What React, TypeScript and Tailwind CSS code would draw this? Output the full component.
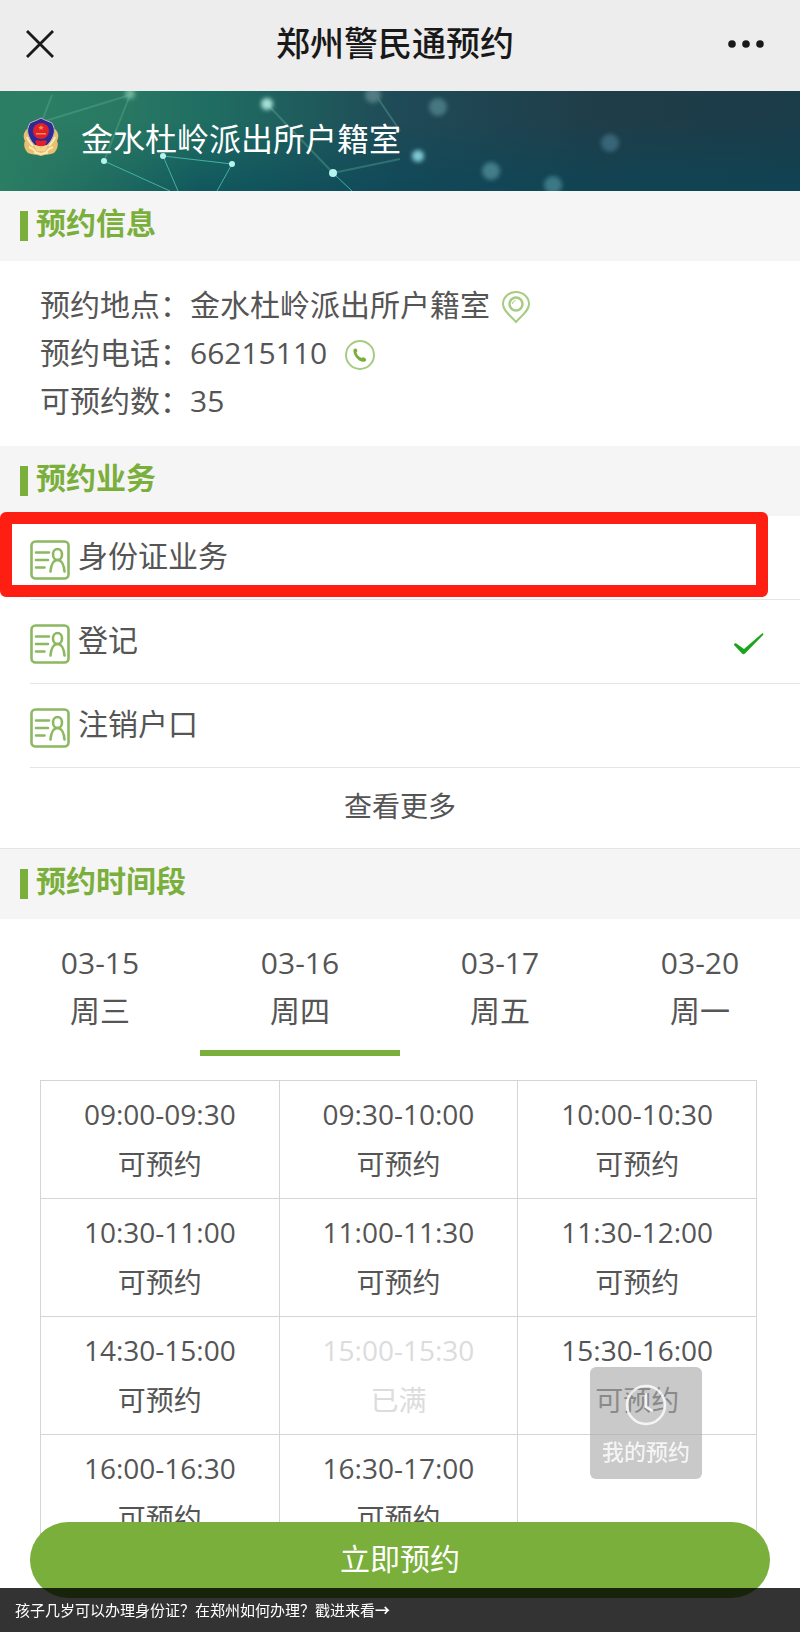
import { useState } from "react"

const services = ["身份证业务", "登记", "注销户口"]

const days = [
  { date: "03-15", week: "周三" },
  { date: "03-16", week: "周四" },
  { date: "03-17", week: "周五" },
  { date: "03-20", week: "周一" },
]

const slots = [
  { time: "09:00-09:30" },
  { time: "09:30-10:00" },
  { time: "10:00-10:30" },
  { time: "10:30-11:00" },
  { time: "11:00-11:30" },
  { time: "11:30-12:00" },
  { time: "14:30-15:00" },
  { time: "15:00-15:30", full: true },
  { time: "15:30-16:00" },
  { time: "16:00-16:30" },
  { time: "16:30-17:00" },
]

function SectionTitle({ children }: { children: string }) {
  return (
    <div className="flex h-[70px] gap-2 bg-[#f5f5f5] px-5 pt-2.5">
      <span className="mt-2.5 h-[30px] w-2 bg-[#7aaf3c]" />
      <h2 className="text-[30px] leading-[44px] font-bold text-[#7aaf3c]">{children}</h2>
    </div>
  )
}

function BannerArt() {
  return (
    <svg className="absolute inset-0 h-full w-full" viewBox="0 0 800 100" preserveAspectRatio="none" aria-hidden="true">
      <defs>
        <linearGradient id="base" x1="0" y1="0" x2="1" y2="0">
          <stop offset="0" stopColor="#2f8064" />
          <stop offset="0.27" stopColor="#1f6c62" />
          <stop offset="0.5" stopColor="#1f4a57" />
          <stop offset="0.75" stopColor="#1f3d49" />
          <stop offset="1" stopColor="#1b3c49" />
        </linearGradient>
        <linearGradient id="depth" x1="0" y1="0" x2="0" y2="1">
          <stop offset="0.3" stopColor="#06485a" stopOpacity="0" />
          <stop offset="1" stopColor="#06485a" stopOpacity="0.6" />
        </linearGradient>
        <linearGradient id="fade" x1="0" y1="0" x2="1" y2="0">
          <stop offset="0" stopColor="#2b7d63" />
          <stop offset="1" stopColor="#2b7d63" stopOpacity="0" />
        </linearGradient>
        <filter id="soft" x="-50%" y="-50%" width="200%" height="200%">
          <feGaussianBlur stdDeviation="2" />
        </filter>
      </defs>
      <rect width="800" height="100" fill="url(#base)" />
      <rect width="800" height="100" fill="url(#depth)" />
      <rect width="200" height="100" fill="url(#fade)" />
      <g stroke="#5fb79c" strokeWidth="2" opacity="0.35" fill="none">
        <path d="M45 30 130 4M52 4 42 30M130 4 104 70" />
        <path d="M267 13 333 82M375 3 400 40M333 82 400 68" />
      </g>
      <g stroke="#4cc0ae" strokeWidth="1" opacity="0.85" fill="none">
        <path d="M104 70 170 100M163 65 178 100M163 65 232 73 217 100M333 82 352 100" />
      </g>
      <g fill="#b5f3ee">
        <circle cx="104" cy="70" r="3" />
        <circle cx="163" cy="65" r="3" />
        <circle cx="232" cy="73" r="3" />
        <circle cx="333" cy="82" r="4" />
      </g>
      <g filter="url(#soft)">
        <circle cx="267" cy="13" r="6" fill="#a5e0d6" />
        <circle cx="130" cy="3" r="5" fill="#6fb89c" />
        <circle cx="373" cy="4" r="8" fill="#517b83" />
        <circle cx="418" cy="65" r="6" fill="#7dc8d4" />
        <circle cx="438" cy="16" r="9" fill="#467780" />
        <circle cx="491" cy="80" r="9" fill="#437d88" />
        <circle cx="553" cy="94" r="9" fill="#3b7885" />
        <circle cx="610" cy="52" r="9" fill="#376577" />
      </g>
    </svg>
  )
}

function PoliceBadge() {
  return (
    <svg className="h-10 w-9" viewBox="0 0 36 40" aria-hidden="true">
      <path d="M4 12C0 16 0 20 2 24c-2 4 0 9 3 12 4 2 8 1 13 3 5-2 9-1 13-3 3-3 5-8 3-12 2-4 2-8-2-12z" fill="#e8c070" />
      <path d="M4 20c1 4 4 6 6 9M32 20c-1 4-4 6-6 9M6 30c3 1 5 2 7 5M30 30c-3 1-5 2-7 5M11 36c3-1 5 1 7 1s4-2 7-1" stroke="#fbe9b5" strokeWidth="2" fill="none" />
      <path d="M18 1c3 2 7 3 11 5 2 4 3 7 2 11-2 6-5 10-8 12H13c-3-2-6-6-8-12-1-4 0-7 2-11 4-2 8-3 11-5z" fill="#2c2a96" stroke="#c5b5b8" strokeWidth="1" />
      <circle cx="18" cy="14" r="8" fill="#e0202a" />
      <path d="m18 8 .8 1.800 2 .2-1.500 1.200.5 1.800-1.800-1-1.800 1 .5-1.800-1.500-1.200 2-.2zM13 16h10v1.500H13z" fill="#f28a4a" />
      <path d="M12 24c2-1 4-1 6 0 2-1 4-1 6 0l-2 5h-8z" fill="#e0202a" />
      <path d="M11 28c3 0 5 1 7 3 2-2 4-3 7-3l-3 6h-8z" fill="#f3d68c" />
    </svg>
  )
}

function IdCardIcon() {
  return (
    <svg className="size-10 shrink-0" viewBox="0 0 40 40" fill="none" stroke="#8bb860" strokeWidth="2.600" strokeLinecap="round" aria-hidden="true">
      <rect x="1.500" y="1.500" width="37" height="37" rx="4" />
      <path d="M6 12.500h13M6 20h12M6 27.500h8.500" />
      <ellipse cx="27.500" cy="14.500" rx="4.500" ry="5.500" />
      <path d="M20.500 31.500c.5-6.500 3-11.500 7-11.500s6.500 5 7 11.500" />
    </svg>
  )
}

export default function App() {
  const [service, setService] = useState(1)
  const [day, setDay] = useState(1)

  return (
    <div className="min-h-screen bg-white font-['Open_Sans','Noto_Sans_CJK_SC',sans-serif] text-[#555]">
      <header className="flex h-[91px] items-center justify-between bg-[#ededed] pr-9 pl-[26px] pb-1 text-[#191919]">
        <button aria-label="关闭" className="w-16">
          <svg className="size-7" viewBox="0 0 28 28" stroke="currentColor" strokeWidth="2.800" aria-hidden="true">
            <path d="m1 1 26 26M27 1 1 27" />
          </svg>
        </button>
        <h1 className="text-[34px] font-medium">郑州警民通预约</h1>
        <button aria-label="更多" className="flex w-16 justify-end">
          <svg className="h-2 w-9 shrink-0" viewBox="0 0 36 8" fill="currentColor" aria-hidden="true">
            <circle cx="4" cy="4" r="3.800" />
            <circle cx="18" cy="4" r="3.800" />
            <circle cx="32" cy="4" r="3.800" />
          </svg>
        </button>
      </header>

      <div className="relative h-[100px]">
        <BannerArt />
        <div className="relative flex h-full items-center gap-[22px] px-[23px] pb-2">
          <PoliceBadge />
          <p className="pt-1 text-[32px] text-white">金水杜岭派出所户籍室</p>
        </div>
      </div>

      <SectionTitle>预约信息</SectionTitle>
      <dl className="px-10 pt-5 pb-[21px] text-[30px] leading-[48px]">
        <div className="flex">
          <dt>预约地点：</dt>
          <dd className="flex items-center gap-3">
            金水杜岭派出所户籍室
            <a href="#map" aria-label="地图">
              <svg className="mt-1 h-8 w-7" viewBox="0 0 28 32" fill="none" stroke="#a5cc80" strokeWidth="2" aria-hidden="true">
                <path d="M14 31C9 25 1 20 1 13a13 12 0 0 1 26 0c0 7-8 12-13 18z" />
                <circle cx="14" cy="13" r="6.500" strokeWidth="2.500" />
                <path d="M10.500 13a3.500 3.500 0 0 1 3-3.500" strokeWidth="1" />
              </svg>
            </a>
          </dd>
        </div>
        <div className="flex">
          <dt>预约电话：</dt>
          <dd className="flex items-center gap-[18px]">
            66215110
            <a href="tel:66215110" aria-label="拨打电话">
              <svg className="mt-1 size-[30px]" viewBox="0 0 30 30" fill="none" aria-hidden="true">
                <circle cx="15" cy="15" r="14" stroke="#a5cc80" strokeWidth="2" />
                <path d="M8.500 9.500c1-1.500 3-1.500 3.500 0s.5 2-.5 3c.5 2.500 2.500 4.500 5 5.500 1-1 2-1 3.500 0s1.500 2.500 0 3.500c-5 2-12.500-6-11.500-12z" fill="#7aaf3c" />
              </svg>
            </a>
          </dd>
        </div>
        <div className="flex">
          <dt>可预约数：</dt>
          <dd>35</dd>
        </div>
      </dl>

      <SectionTitle>预约业务</SectionTitle>
      <ul className="relative">
        {services.map((name, i) => (
          <li key={name} className="pl-[30px]">
            <button
              onClick={() => setService(i)}
              aria-pressed={service === i}
              className="flex h-[84px] w-full items-center gap-2 border-b border-[#e5e5e5] pt-1 pr-9 text-left text-[30px]"
            >
              <IdCardIcon />
              <span className="flex-1 pb-2">{name}</span>
              {service === i && (
                <svg className="h-[22px] w-[30px]" viewBox="0 0 30 22" fill="#1aa51c" aria-hidden="true">
                  <path d="M0 12c0-2 2-2 3-1l7 5L28 .5c1-.5 2 .5 1 1.500L11 20.500c-1 1-2 1-3 0z" />
                </svg>
              )}
            </button>
          </li>
        ))}
        {/* highlight frame over the first item */}
        <li aria-hidden="true" className="pointer-events-none absolute -top-1 right-8 left-0 h-[85px] rounded-md border-12 border-[#ff1e12]" />
      </ul>
      <button className="block h-[81px] w-full border-b border-[#e5e5e5] pb-1 text-[28px]">查看更多</button>

      <SectionTitle>预约时间段</SectionTitle>
      <div className="grid grid-cols-4" role="tablist">
        {days.map((d, i) => (
          <button
            key={d.date}
            role="tab"
            aria-selected={day === i}
            onClick={() => setDay(i)}
            className={`border-b-6 pt-5 pb-[15px] text-[30px] leading-[48px] ${day === i ? "border-[#7aaf3c]" : "border-transparent"}`}
          >
            <span className="block">{d.date}</span>
            <span className="block">{d.week}</span>
          </button>
        ))}
      </div>

      <div className="mt-6 mr-[43px] mb-10 ml-10 grid grid-cols-3 border-t border-l border-[#d5d5d5] text-[28px] leading-[50px]">
        {slots.map((s) => (
          <button
            key={s.time}
            disabled={s.full}
            className={`border-r border-b border-[#d5d5d5] pt-2 pb-[9px] ${s.full ? "text-[#dcdcdc]" : ""}`}
          >
            <span className="block">{s.time}</span>
            <span className="block">{s.full ? "已满" : "可预约"}</span>
          </button>
        ))}
        <div className="border-r border-b border-[#d5d5d5]" />
      </div>

      <button className="fixed right-[98px] bottom-[153px] flex size-28 flex-col items-center gap-2 rounded-md bg-[#a9a9a9]/63 pt-4 text-[22px] font-medium text-white/80">
        <svg className="size-11" viewBox="0 0 44 44" fill="none" stroke="currentColor" strokeWidth="2.500" aria-hidden="true">
          <circle cx="22" cy="22" r="19" />
          <path d="M22 10v14l7 4" />
        </svg>
        我的预约
      </button>

      <button className="fixed right-[30px] bottom-[34px] left-[30px] h-[76px] rounded-full bg-[#7aaf3c] pb-1 text-[30px] text-white">
        立即预约
      </button>
      <a href="#more" className="fixed right-0 bottom-0 left-0 flex h-11 items-center bg-black/80 px-[15px] text-[15px] text-white">
        孩子几岁可以办理身份证？在郑州如何办理？戳进来看
        <b>→</b>
      </a>
    </div>
  )
}
